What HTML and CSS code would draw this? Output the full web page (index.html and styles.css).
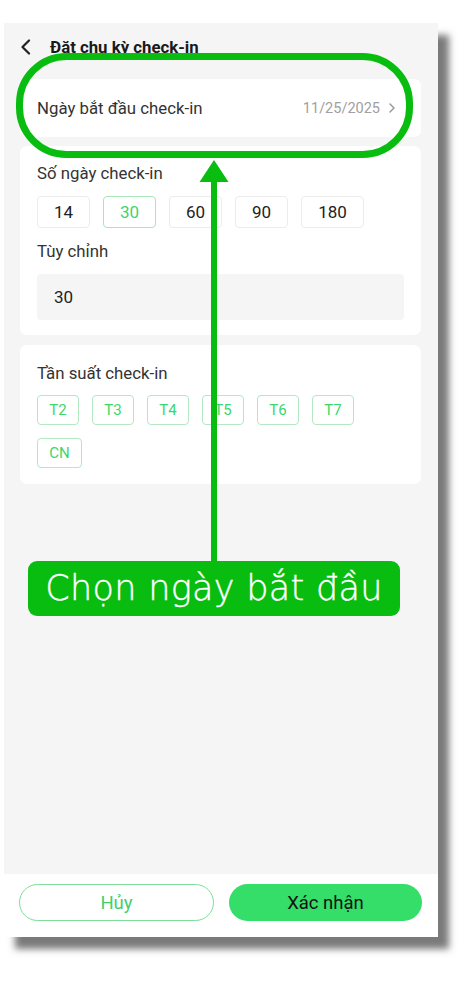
FILE: index.html
```html
<!DOCTYPE html>
<html lang="vi">
<head>
<meta charset="utf-8">
<link rel="stylesheet" href="styles.css">
</head>
<body>
<div class="page">
  <div class="screen">
    <div class="header">
      <svg class="back" width="12" height="16" viewBox="0 0 12 16"><path d="M9 1.5 L2.5 8 L9 14.5" fill="none" stroke="#222" stroke-width="2.2" stroke-linecap="round" stroke-linejoin="round"/></svg>
      <span class="title">Đặt chu kỳ check-in</span>
    </div>
    <div class="content">
      <div class="card row-card">
        <span class="label">Ngày bắt đầu check-in</span>
        <span class="value">11/25/2025
          <svg class="chev" width="8" height="12" viewBox="0 0 8 12"><path d="M2 2 L6 6 L2 10" fill="none" stroke="#9a9a9a" stroke-width="1.5" stroke-linecap="round" stroke-linejoin="round"/></svg>
        </span>
      </div>
      <div class="card section days-card">
        <div class="label">Số ngày check-in</div>
        <div class="opts">
          <span class="opt">14</span>
          <span class="opt sel">30</span>
          <span class="opt">60</span>
          <span class="opt">90</span>
          <span class="opt wide">180</span>
        </div>
        <div class="label">Tùy chỉnh</div>
        <div class="input">30</div>
      </div>
      <div class="card section freq-card">
        <div class="label">Tần suất check-in</div>
        <div class="chips">
          <span class="chip">T2</span>
          <span class="chip">T3</span>
          <span class="chip">T4</span>
          <span class="chip">T5</span>
          <span class="chip">T6</span>
          <span class="chip">T7</span>
          <span class="chip cn">CN</span>
        </div>
      </div>
    </div>
    <div class="bottom">
      <button class="btn cancel">Hủy</button>
      <button class="btn ok">Xác nhận</button>
    </div>
  </div>

  <svg class="overlay" width="474" height="995" viewBox="0 0 474 995">
    <rect x="19.5" y="56.5" width="390" height="98" rx="47" ry="47" fill="none" stroke="#08bd10" stroke-width="7"/>
    <rect x="211" y="178" width="6" height="386" fill="#08bd10"/>
    <polygon points="214,160 199.5,182 228.5,182" fill="#08bd10"/>
  </svg>
  <div class="callout">Chọn ngày bắt đầu</div>
</div>
</body>
</html>
```
FILE: styles.css
```css
* { box-sizing: border-box; }
html, body { margin: 0; padding: 0; background: #fff; }
body { font-family: Roboto, "Noto Sans", sans-serif; }

.page {
  position: relative;
  width: 474px;
  height: 995px;
  overflow: hidden;
  padding: 23px 0 0 4px;
}

.screen {
  width: 434px;
  height: 914px;
  background: #f5f5f5;
  display: flex;
  flex-direction: column;
  box-shadow: 11px 12px 7px rgba(0, 0, 0, 0.52);
}

.header {
  height: 46px;
  display: flex;
  align-items: center;
  padding-left: 16px;
  padding-top: 1px;
}
.back { margin-right: 18px; }
.title {
  font-size: 16.8px;
  font-weight: 700;
  color: #1a1a1a;
}

.content {
  flex: 1;
  padding: 10px 17px 0 16px;
  display: flex;
  flex-direction: column;
  gap: 9px;
}

.card {
  background: #fff;
  border-radius: 7px;
}

.row-card {
  height: 58px;
  display: flex;
  align-items: center;
  justify-content: space-between;
  padding: 0 25px 0 17px;
}
.label {
  font-size: 16.8px;
  color: #333;
  line-height: 20px;
}
.value {
  font-size: 14.5px;
  color: #a0a0a0;
  display: flex;
  align-items: center;
  gap: 8px;
}

.section {
  padding: 17px 17px 15px 17px;
  display: flex;
  flex-direction: column;
  gap: 13px;
}
.freq-card { padding: 18px 17px 16px 17px; gap: 12px; margin-top: 1px; }

.opts { display: flex; gap: 13px; }
.opt {
  width: 53px;
  height: 32px;
  border: 1px solid #ececec;
  border-radius: 4px;
  display: flex;
  align-items: center;
  justify-content: center;
  font-size: 17px;
  color: #222;
}
.opt.wide { width: 63px; }
.opt.sel { border-color: #a9e6bb; color: #3fd46c; }

.input {
  height: 46px;
  background: #f5f5f5;
  border-radius: 4px;
  padding-left: 17px;
  display: flex;
  align-items: center;
  font-size: 17px;
  color: #222;
}

.chips {
  display: flex;
  flex-wrap: wrap;
  column-gap: 13px;
  row-gap: 13px;
  width: 330px;
}
.chip {
  width: 42px;
  height: 30px;
  border: 1px solid #b3e8c3;
  border-radius: 4px;
  display: flex;
  align-items: center;
  justify-content: center;
  font-size: 15px;
  color: #3dd66b;
}
.chip.cn { width: 45px; }

.bottom {
  height: 63px;
  background: #fff;
  display: flex;
  gap: 15px;
  padding: 10px 16px 16px 15px;
}
.btn {
  flex: 1;
  height: 37px;
  border-radius: 19px;
  font-family: Roboto, "Noto Sans", sans-serif;
  font-weight: 400;
  font-size: 18.5px;
}
.cancel {
  background: #fff;
  border: 1.5px solid #7fdc9c;
  color: #3fd06c;
}
.ok {
  background: #35de69;
  border: none;
  color: #111;
}

.overlay {
  position: absolute;
  left: 0;
  top: 0;
  pointer-events: none;
}
.callout {
  position: absolute;
  left: 28px;
  top: 561px;
  width: 372px;
  height: 55px;
  background: #08bd10;
  border-radius: 9px;
  color: #fff;
  font-family: "DejaVu Sans", sans-serif;
  font-weight: 200;
  font-size: 35px;
  letter-spacing: 0.3px;
  display: flex;
  align-items: center;
  justify-content: center;
  padding-bottom: 2px;
  white-space: nowrap;
  -webkit-text-stroke: 0.4px #fff;
}
```
